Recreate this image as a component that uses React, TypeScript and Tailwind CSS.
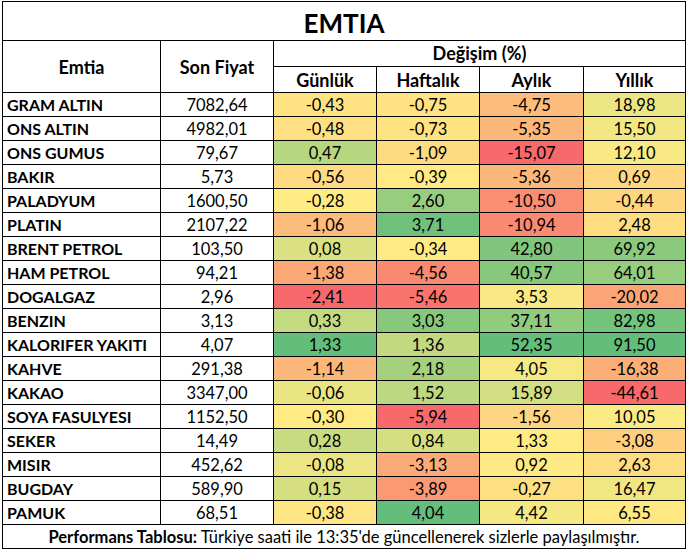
import React from "react";

type Row = [string, string, number, number, number, number];

const rows: Row[] = [
  ["GRAM ALTIN", "7082,64", -0.43, -0.75, -4.75, 18.98],
  ["ONS ALTIN", "4982,01", -0.48, -0.73, -5.35, 15.5],
  ["ONS GUMUS", "79,67", 0.47, -1.09, -15.07, 12.1],
  ["BAKIR", "5,73", -0.56, -0.39, -5.36, 0.69],
  ["PALADYUM", "1600,50", -0.28, 2.6, -10.5, -0.44],
  ["PLATIN", "2107,22", -1.06, 3.71, -10.94, 2.48],
  ["BRENT PETROL", "103,50", 0.08, -0.34, 42.8, 69.92],
  ["HAM PETROL", "94,21", -1.38, -4.56, 40.57, 64.01],
  ["DOGALGAZ", "2,96", -2.41, -5.46, 3.53, -20.02],
  ["BENZIN", "3,13", 0.33, 3.03, 37.11, 82.98],
  ["KALORIFER YAKITI", "4,07", 1.33, 1.36, 52.35, 91.5],
  ["KAHVE", "291,38", -1.14, 2.18, 4.05, -16.38],
  ["KAKAO", "3347,00", -0.06, 1.52, 15.89, -44.61],
  ["SOYA FASULYESI", "1152,50", -0.3, -5.94, -1.56, 10.05],
  ["SEKER", "14,49", 0.28, 0.84, 1.33, -3.08],
  ["MISIR", "452,62", -0.08, -3.13, 0.92, 2.63],
  ["BUGDAY", "589,90", 0.15, -3.89, -0.27, 16.47],
  ["PAMUK", "68,51", -0.38, 4.04, 4.42, 6.55],
];

const RED = [248, 105, 107];
const YEL = [255, 235, 132];
const GRN = [99, 190, 123];

function median(vals: number[]) {
  const s = [...vals].sort((a, b) => a - b);
  const n = s.length;
  const pos = (n - 1) * 0.5;
  const lo = Math.floor(pos);
  const hi = Math.ceil(pos);
  return s[lo] + (s[hi] - s[lo]) * (pos - lo);
}

function mix(a: number[], b: number[], t: number) {
  return `rgb(${a.map((v, i) => Math.round(v + (b[i] - v) * t)).join(",")})`;
}

const scales = [2, 3, 4, 5].map((ci) => {
  const vals = rows.map((r) => r[ci] as number);
  return { min: Math.min(...vals), max: Math.max(...vals), mid: median(vals) };
});

function colorFor(ci: number, v: number) {
  const { min, max, mid } = scales[ci];
  if (v <= mid) {
    const t = mid === min ? 1 : (v - min) / (mid - min);
    return mix(RED, YEL, t);
  }
  const t = max === mid ? 0 : (v - mid) / (max - mid);
  return mix(YEL, GRN, t);
}

const fmt = (v: number) => v.toFixed(2).replace(".", ",");

export default function App() {
  return (
    <div className="bg-white w-[687px] h-[550px] pt-px pl-[2px] font-['Lato','Noto_Sans',sans-serif] text-black">
      <div className="grid w-fit bg-black p-px gap-px grid-cols-[157px_112px_102px_102px_103px_101px] grid-rows-[38px_25px_25px_repeat(18,23px)_23px]">
        <div className="col-span-6 bg-white flex items-center justify-center pt-[4px] text-[26px] font-bold">
          EMTIA
        </div>
        <div className="col-start-1 row-start-2 row-span-2 bg-white flex items-center justify-center text-[18px] font-bold pt-[2px]">
          Emtia
        </div>
        <div className="col-start-2 row-start-2 row-span-2 bg-white flex items-center justify-center text-[18px] font-bold pt-[2px]">
          Son Fiyat
        </div>
        <div className="col-start-3 col-span-4 row-start-2 bg-white flex items-center justify-center text-[18px] font-bold">
          Değişim (%)
        </div>
        {["Günlük", "Haftalık", "Aylık", "Yıllık"].map((h, i) => (
          <div
            key={h}
            className={`row-start-3 bg-white flex items-center justify-center text-[18px] font-bold pt-[1px] ${
              ["col-start-3", "col-start-4", "col-start-5", "col-start-6"][i]
            }`}
          >
            {h}
          </div>
        ))}
        {rows.map((r) => (
          <React.Fragment key={r[0]}>
            <div className="bg-white flex items-center pl-[4px] pt-[1px] text-[16px] font-bold whitespace-nowrap overflow-hidden">
              {r[0]}
            </div>
            <div className="bg-white flex items-center justify-center pt-[2px] text-[16.5px]">{r[1]}</div>
            {[2, 3, 4, 5].map((ci) => (
              <div
                key={ci}
                className="flex items-center justify-center pt-[2px] text-[16.5px]"
                style={{ backgroundColor: colorFor(ci - 2, r[ci] as number) }}
              >
                {fmt(r[ci] as number)}
              </div>
            ))}
          </React.Fragment>
        ))}
        <div className="col-span-6 bg-white flex items-center justify-center pt-[2px] text-[16.5px]">
          <span>
            <span className="font-bold">Performans Tablosu:</span> Türkiye saati ile 13:35'de güncellenerek sizlerle
            paylaşılmıştır.
          </span>
        </div>
      </div>
    </div>
  );
}
